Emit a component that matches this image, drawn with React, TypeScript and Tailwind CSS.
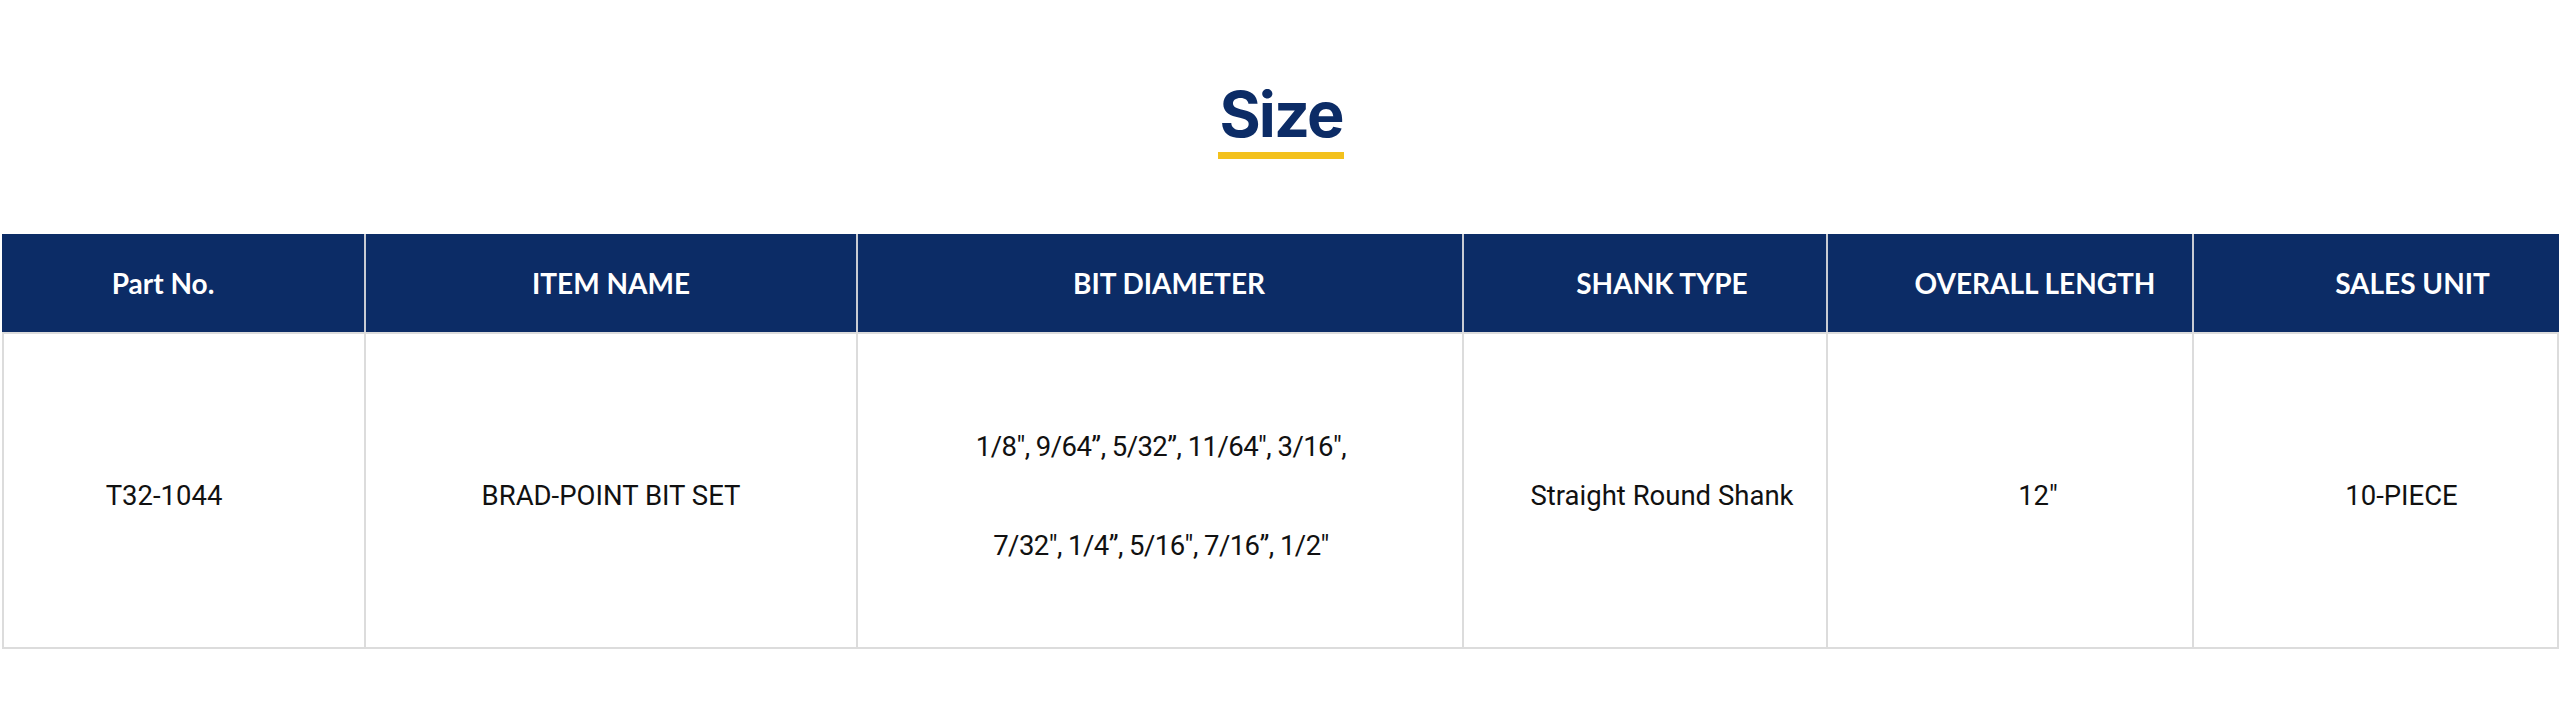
import React from 'react'

const headFont = { fontFamily: 'Lato, "Noto Sans", sans-serif' }
const bodyFont = { fontFamily: 'Roboto, "Noto Sans", sans-serif' }

const columns = [
  { label: 'Part No.', width: 'w-[364px]', head: 'pr-[40px]', body: 'pr-[40px]' },
  { label: 'ITEM NAME', width: 'w-[492px]', head: '', body: '' },
  { label: 'BIT DIAMETER', width: 'w-[606px]', head: 'pl-[18px]', body: 'pl-[2px]' },
  { label: 'SHANK TYPE', width: 'w-[364px]', head: 'pl-[34px]', body: 'pl-[34px]' },
  { label: 'OVERALL LENGTH', width: 'w-[366px]', head: 'pl-[50px]', body: 'pl-[56px]' },
  { label: 'SALES UNIT', width: 'w-[365px]', head: 'pl-[72px]', body: 'pl-[52px]' },
]

const row: React.ReactNode[] = [
  'T32-1044',
  'BRAD-POINT BIT SET',
  <>
    <div className="tracking-[-0.02em]">1/8", 9/64”, 5/32”, 11/64", 3/16",</div>
    <div className="tracking-[-0.02em]">7/32", 1/4”, 5/16", 7/16”, 1/2"</div>
  </>,
  'Straight Round Shank',
  '12"',
  '10-PIECE',
]

const App = () => {
  return (
    <div className="w-full min-h-[718px] bg-white pt-[83px]">
      {/* heading */}
      <div className="flex flex-col items-center">
        <h2
          className="text-[63px] font-bold leading-none tracking-[-0.03em] text-[#0c2c66]"
          style={{ fontFamily: 'Inter, sans-serif' }}
        >
          Size
        </h2>
        <div className="mt-[6px] h-[7px] w-[126px] bg-[#f3c11c]" />
      </div>

      {/* size table */}
      <table className="mt-[75px] ml-[2px] w-[2557px] table-fixed border-separate border-spacing-0">
        <colgroup>
          {columns.map((c, i) => (
            <col key={i} className={c.width} />
          ))}
        </colgroup>
        <thead>
          <tr>
            {columns.map((c, i) => (
              <th
                key={i}
                style={headFont}
                className={`h-[98px] bg-[#0c2c66] text-center align-middle text-[28px] font-bold text-white ${
                  i < columns.length - 1 ? 'border-r-2 border-[#c9ccd3]' : ''
                } ${c.head}`}
              >
                {c.label}
              </th>
            ))}
          </tr>
        </thead>
        <tbody>
          <tr>
            {row.map((cell, i) => (
              <td
                key={i}
                style={bodyFont}
                className={`h-[317px] border-b-2 border-r-2 border-t-2 border-[#dcdcdc] pt-[10px] text-center align-middle text-[27.5px] text-[#111] ${
                  i === 0 ? 'border-l-2' : ''
                } ${i === 2 ? 'leading-[99px]' : ''} ${columns[i].body}`}
              >
                {cell}
              </td>
            ))}
          </tr>
        </tbody>
      </table>
    </div>
  )
}

export default App
